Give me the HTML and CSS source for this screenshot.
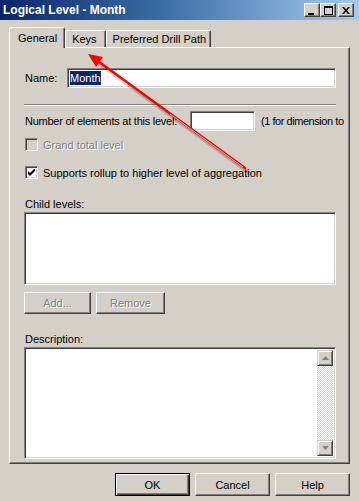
FILE: index.html
```html
<!DOCTYPE html>
<html lang="en">
<head>
    <meta charset="UTF-8">
    <title>Logical Level - Month</title>
    <link rel="stylesheet" href="styles.css">
</head>
<body>
    <div class="window">
        <div class="titlebar">
            <span class="title">Logical Level - Month</span>
            <div class="title-buttons">
                <span class="tbtn"><span class="glyph-min"></span></span>
                <span class="tbtn"><span class="glyph-max"></span></span>
                <span class="tbtn close">
                    <svg width="8" height="7" viewBox="0 0 8 7"><path d="M0 0h2l2 2.5 2-2.5h2l-3 3.5 3 3.5h-2l-2-2.5-2 2.5h-2l3-3.5z" fill="#000"/></svg>
                </span>
            </div>
        </div>

        <div class="tabs">
            <div class="tab active">General</div>
            <div class="tab">Keys</div>
            <div class="tab">Preferred Drill Path</div>
        </div>

        <div class="panel">
            <div class="row name-row">
                <label class="name-label">Name:</label>
                <div class="field name-field"><span class="selected">Month</span></div>
            </div>

            <div class="separator"></div>

            <div class="row count-row">
                <label>Number of elements at this level:</label>
                <div class="field count-field"></div>
                <span class="hint">(1 for dimension to</span>
            </div>

            <div class="check disabled">
                <span class="box"></span>
                <span>Grand total level</span>
            </div>
            <div class="check">
                <span class="box">
                    <svg width="7" height="7" viewBox="0 0 7 7"><path d="M0 2l2 2 5-5v2l-5 5-2-2z" fill="#000"/><path d="M0 3l2 2 5-5v2l-5 5-2-2z" fill="#000"/></svg>
                </span>
                <span>Supports rollup to higher level of aggregation</span>
            </div>

            <div class="caption child-caption">Child levels:</div>
            <div class="field list-box"></div>

            <div class="list-buttons">
                <button class="btn disabled add-btn">Add...</button>
                <button class="btn disabled remove-btn">Remove</button>
            </div>

            <div class="caption desc-caption">Description:</div>
            <div class="field desc-box">
                <div class="scrollbar">
                    <span class="sbtn">
                        <svg width="7" height="4" viewBox="0 0 7 4"><path d="M3.5 0L7 4H0z" fill="#808080"/></svg>
                    </span>
                    <span class="track"></span>
                    <span class="sbtn">
                        <svg width="7" height="4" viewBox="0 0 7 4"><path d="M0 0h7L3.5 4z" fill="#808080"/></svg>
                    </span>
                </div>
            </div>
        </div>

        <div class="footer">
            <button class="btn default">OK</button>
            <button class="btn">Cancel</button>
            <button class="btn">Help</button>
        </div>

        <svg class="arrow" width="359" height="501" viewBox="0 0 359 501">
            <line x1="248" y1="172" x2="97" y2="62" stroke="rgba(0,0,0,0.18)" stroke-width="4" stroke-linecap="round"/>
            <line x1="245" y1="168" x2="95" y2="59" stroke="#f00" stroke-width="2.5" stroke-linecap="round"/>
            <line x1="243" y1="167" x2="170" y2="114" stroke="#ffd0d0" stroke-width="0.8"/>
            <polygon points="88,54 96,67 103,57" fill="#f00"/>
        </svg>
    </div>
</body>
</html>
```

FILE: styles.css
```css
body {
    margin: 0;
    font-family: "Liberation Sans", Arial, sans-serif;
    font-size: 11px;
    color: #000;
    background: #d4d0c8;
}
.window {
    position: relative;
    width: 359px;
    height: 501px;
    background: #d4d0c8;
    overflow: hidden;
}
.titlebar {
    height: 20px;
    display: flex;
    align-items: center;
    justify-content: space-between;
    background: linear-gradient(to right, #0a246a 0%, #3a6ea5 45%, #a6caf0 100%);
}
.title {
    color: #fff;
    font-family: "Liberation Sans", Arial, sans-serif;
    font-weight: bold;
    font-size: 12px;
    padding-left: 3px;
}
.title-buttons {
    display: flex;
    padding-right: 5px;
}
.tbtn {
    width: 14px;
    height: 12px;
    display: flex;
    align-items: center;
    justify-content: center;
    background: #d4d0c8;
    border: 1px solid;
    border-color: #fff #404040 #404040 #fff;
    box-shadow: inset -1px -1px #808080;
}
.tbtn.close {
    margin-left: 2px;
}
.glyph-min {
    width: 6px;
    height: 2px;
    background: #000;
    margin-top: 7px;
    margin-right: 2px;
}
.glyph-max {
    width: 7px;
    height: 6px;
    border: 1px solid #000;
    border-top-width: 2px;
}
.tabs {
    display: flex;
    align-items: flex-end;
    height: 20px;
    margin: 7px 0 0 9px;
    position: relative;
    z-index: 1;
}
.tab {
    height: 16px;
    line-height: 16px;
    padding: 0 5px;
    border: 1px solid;
    border-bottom: none;
    border-color: #fff #404040 transparent #fff;
    box-shadow: inset -1px 0 #808080;
    border-radius: 2px 2px 0 0;
    background: #d4d0c8;
}
.tab.active {
    height: 20px;
    line-height: 20px;
    padding: 0 7px 0 8px;
    margin-bottom: -1px;
}
.tab:nth-child(2) {
    padding: 0 8px 0 6px;
}
.tab:nth-child(3) {
    padding: 0 4px 0 6px;
}
.panel {
    margin-left: 9px;
    width: 341px;
    height: 417px;
    box-sizing: border-box;
    border: 1px solid;
    border-color: #fff #404040 #404040 #fff;
    box-shadow: inset -1px -1px #808080;
    padding: 20px 13px 0 14px;
}
.row {
    display: flex;
    align-items: center;
}
.row label {
    white-space: nowrap;
    padding-left: 1px;
    flex-shrink: 0;
}
.field {
    background: #fff;
    box-sizing: border-box;
    border: 1px solid;
    border-color: #808080 #fff #fff #808080;
    box-shadow: inset 1px 1px #404040, inset -1px -1px #d4d0c8;
}
.name-label {
    width: 42px;
}
.name-field {
    flex: 1;
    height: 20px;
    padding: 2px 2px 0 2px;
    line-height: 14px;
}
.selected {
    background: #0a246a;
    color: #fff;
    padding: 1px 0;
}
.separator {
    margin: 16px 0 5px 0;
    border-top: 1px solid #808080;
    border-bottom: 1px solid #fff;
}
.count-row label {
    width: 165px;
    letter-spacing: -0.25px;
}
.count-field {
    width: 65px;
    height: 20px;
    flex-shrink: 0;
}
.hint {
    margin-left: 6px;
    white-space: nowrap;
    letter-spacing: -0.45px;
}
.check {
    display: flex;
    align-items: center;
    height: 13px;
    margin-top: 7px;
    padding-left: 1px;
    gap: 5px;
}
.check + .check {
    margin-top: 15px;
}
.check.disabled {
    color: #808080;
    text-shadow: 1px 1px #fff;
}
.box {
    width: 13px;
    height: 13px;
    box-sizing: border-box;
    background: #fff;
    border: 1px solid;
    border-color: #808080 #fff #fff #808080;
    box-shadow: inset 1px 1px #404040, inset -1px -1px #d4d0c8;
    display: flex;
    align-items: center;
    justify-content: center;
}
.check.disabled .box {
    background: #d4d0c8;
}
.caption {
    height: 13px;
    line-height: 13px;
    padding-left: 1px;
}
.child-caption {
    margin-top: 19px;
}
.list-box {
    height: 73px;
    margin-top: 1px;
}
.list-buttons {
    display: flex;
    gap: 5px;
    margin-top: 7px;
}
.btn {
    font-family: inherit;
    font-size: 11px;
    height: 22px;
    background: #d4d0c8;
    border: 1px solid;
    border-color: #fff #404040 #404040 #fff;
    box-shadow: inset -1px -1px #808080;
    padding: 0;
    color: #000;
}
.btn.disabled {
    color: #808080;
    text-shadow: 1px 1px #fff;
}
.add-btn {
    width: 67px;
}
.remove-btn {
    width: 69px;
}
.desc-caption {
    margin-top: 19px;
}
.desc-box {
    height: 112px;
    margin-top: 1px;
    display: flex;
    justify-content: flex-end;
    padding: 2px;
}
.scrollbar {
    width: 16px;
    display: flex;
    flex-direction: column;
}
.sbtn {
    width: 16px;
    height: 16px;
    box-sizing: border-box;
    background: #d4d0c8;
    border: 1px solid;
    border-color: #d4d0c8 #404040 #404040 #d4d0c8;
    box-shadow: inset 1px 1px #fff, inset -1px -1px #808080;
    display: flex;
    align-items: center;
    justify-content: center;
}
.track {
    flex: 1;
    background: repeating-conic-gradient(#fff 0 25%, #d4d0c8 0 50%) 0 0 / 2px 2px;
}
.footer {
    display: flex;
    justify-content: flex-end;
    gap: 5px;
    width: 350px;
    margin-top: 9px;
}
.footer .btn {
    width: 75px;
    height: 23px;
}
.btn.default {
    border: 1px solid #000;
    box-shadow: inset 1px 1px #fff, inset -1px -1px #404040, inset -2px -2px #808080;
}
.arrow {
    position: absolute;
    left: 0;
    top: 0;
    pointer-events: none;
}
```
